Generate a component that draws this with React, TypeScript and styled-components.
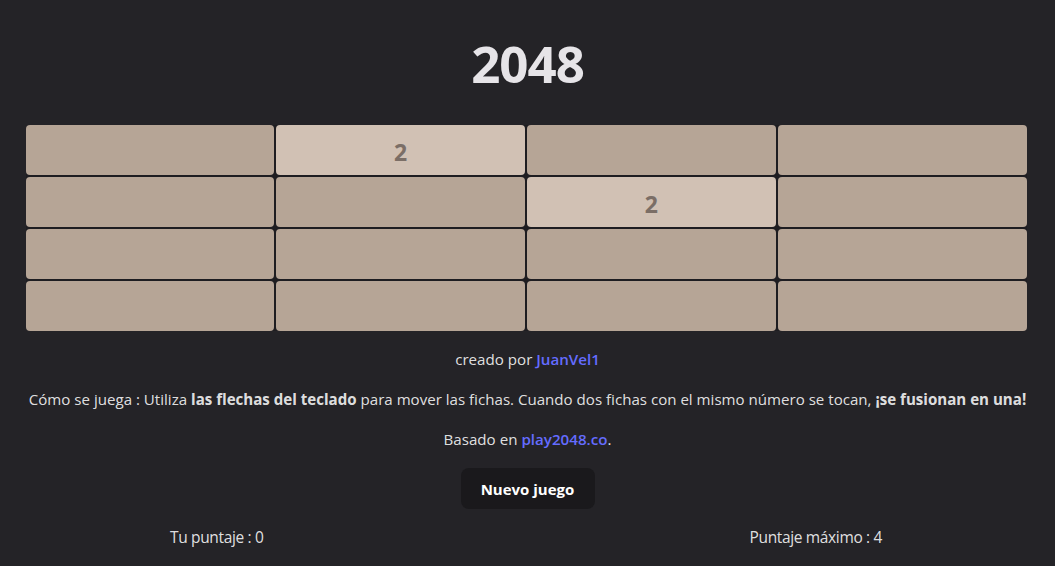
import styled, { createGlobalStyle } from "styled-components";

const GlobalStyle = createGlobalStyle`
  html, body {
    margin: 0;
    padding: 0;
    background: #242327;
  }
  body {
    font-family: "Open Sans", "Noto Sans", sans-serif;
    color: rgba(255, 255, 255, 0.87);
    font-size: 15.15px;
    -webkit-font-smoothing: antialiased;
  }
`;

const Page = styled.div`
  width: 1055px;
  height: 566px;
  display: flex;
  flex-direction: column;
  align-items: center;
  box-sizing: border-box;
  padding-top: 32px;
`;

const Title = styled.h1`
  margin: 0;
  font-size: 51px;
  line-height: 62px;
  font-weight: 700;
  color: #e6e4e8;
  letter-spacing: -1px;
`;

const Board = styled.div`
  margin-top: 31px;
  margin-right: 3px;
  width: 1001px;
  display: grid;
  grid-template-columns: repeat(4, 1fr);
  grid-auto-rows: 50px;
  gap: 2px;
  background: #1e1d21;
  border-radius: 4px;
`;

const Cell = styled.div<{ $value: number }>`
  border-radius: 4px;
  background: ${(p) => (p.$value ? "#d1c1b4" : "#b6a596")};
  color: #7b6e66;
  display: flex;
  align-items: center;
  justify-content: center;
  font-weight: 700;
  font-size: 23px;
  padding-top: 3px;
`;

const Line = styled.p`
  margin: 0;
  text-align: center;
  line-height: 22px;
`;

const Credit = styled(Line)`
  margin-top: 17px;
`;

const Rules = styled(Line)`
  margin-top: 18px;
  font-size: 15.1px;
`;

const Based = styled(Line)`
  margin-top: 18px;
`;

const Link = styled.a`
  color: #646cff;
  font-weight: 600;
  text-decoration: none;
`;

const Button = styled.button`
  margin-top: 18px;
  border: 1px solid transparent;
  border-radius: 8px;
  background: #1a191c;
  color: #fff;
  font-family: inherit;
  font-size: 15px;
  font-weight: 700;
  width: 134px;
  height: 41px;
  cursor: pointer;
`;

const Scores = styled.div`
  margin-top: 17px;
  width: 100%;
  box-sizing: border-box;
  padding: 0 173px 0 170px;
  display: flex;
  justify-content: space-between;
  font-size: 15.5px;
  letter-spacing: -0.35px;
`;

const board = [
  [0, 2, 0, 0],
  [0, 0, 2, 0],
  [0, 0, 0, 0],
  [0, 0, 0, 0],
];

export default function App() {
  return (
    <>
      <GlobalStyle />
      <Page>
        <Title>2048</Title>
        <Board>
          {board.flat().map((v, i) => (
            <Cell key={i} $value={v}>
              {v ? v : ""}
            </Cell>
          ))}
        </Board>
        <Credit>
          creado por <Link href="#">JuanVel1</Link>
        </Credit>
        <Rules>
          Cómo se juega : Utiliza <b>las flechas del teclado</b> para mover las
          fichas. Cuando dos fichas con el mismo número se tocan,{" "}
          <b>¡se fusionan en una!</b>
        </Rules>
        <Based>
          Basado en <Link href="#">play2048.co</Link>.
        </Based>
        <Button>Nuevo juego</Button>
        <Scores>
          <span>Tu puntaje : 0</span>
          <span>Puntaje máximo : 4</span>
        </Scores>
      </Page>
    </>
  );
}
